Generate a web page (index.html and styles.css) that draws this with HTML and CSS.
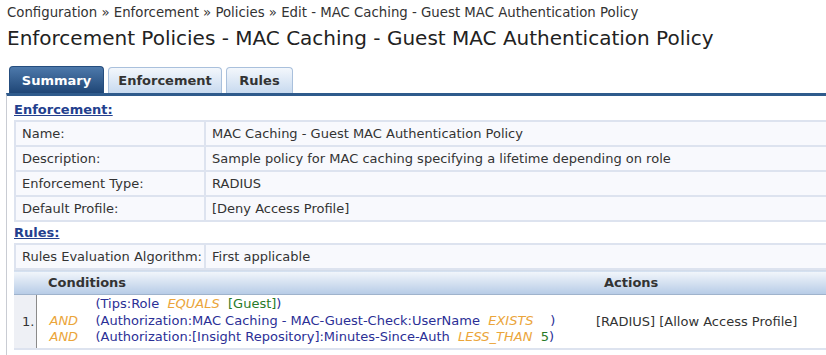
FILE: index.html
```html
<!DOCTYPE html>
<html>
<head>
  <title>Enforcement Policies - MAC Caching</title>
  <link rel="stylesheet" href="styles.css">
</head>
<body>
  <div class="crumbs">Configuration &raquo; Enforcement &raquo; Policies &raquo; Edit - MAC Caching - Guest MAC Authentication Policy</div>
  <h1>Enforcement Policies - MAC Caching - Guest MAC Authentication Policy</h1>

  <div class="tabs">
    <a class="tab active">Summary</a>
    <a class="tab">Enforcement</a>
    <a class="tab">Rules</a>
  </div>

  <div class="panel">
    <div class="section-title">Enforcement:</div>
    <table class="props">
      <tr><td class="label">Name:</td><td>MAC Caching - Guest MAC Authentication Policy</td></tr>
      <tr><td class="label">Description:</td><td>Sample policy for MAC caching specifying a lifetime depending on role</td></tr>
      <tr><td class="label">Enforcement Type:</td><td>RADIUS</td></tr>
      <tr><td class="label">Default Profile:</td><td>[Deny Access Profile]</td></tr>
    </table>

    <div class="section-title rules-title">Rules:</div>
    <table class="props">
      <tr><td class="label">Rules Evaluation Algorithm:</td><td>First applicable</td></tr>
    </table>

    <table class="rules">
      <tr>
        <th class="num-head"></th>
        <th class="cond-head">Conditions</th>
        <th class="act-head">Actions</th>
      </tr>
      <tr>
        <td class="num">1.</td>
        <td class="cond">
          <div class="expr">
            <span class="op"></span>
            <span class="attr">(Tips:Role&nbsp; <i class="kw">EQUALS</i>&nbsp; <span class="val">[Guest]</span>)</span>
            <span class="op">AND</span>
            <span class="attr">(Authorization:MAC Caching - MAC-Guest-Check:UserName&nbsp; <i class="kw">EXISTS</i>&nbsp;&nbsp;&nbsp; )</span>
            <span class="op">AND</span>
            <span class="attr">(Authorization:[Insight Repository]:Minutes-Since-Auth&nbsp; <i class="kw">LESS_THAN</i>&nbsp; <span class="val">5</span>)</span>
          </div>
        </td>
        <td class="act">[RADIUS] [Allow Access Profile]</td>
      </tr>
    </table>
  </div>
</body>
</html>
```

FILE: styles.css
```css
body {
  margin: 0;
  font-family: 'DejaVu Sans', Verdana, sans-serif;
  font-size: 13px;
  color: #333;
  background: #fff;
  overflow: hidden;
}

.crumbs {
  padding: 4px 0 0 7px;
  height: 17px;
  line-height: 17px;
  font-size: 13.3px;
  color: #333;
}

h1 {
  margin: 0;
  padding: 4px 0 0 7px;
  font-size: 20px;
  font-weight: normal;
  line-height: 26px;
  color: #222;
}

.tabs {
  display: flex;
  gap: 4px;
  margin: 15px 0 0 9px;
  height: 27px;
  align-items: flex-end;
}

.tab {
  display: block;
  height: 26px;
  line-height: 26px;
  padding: 0;
  box-sizing: border-box;
  border: 1px solid #a9c0dc;
  border-bottom: none;
  border-radius: 4px 4px 0 0;
  background: linear-gradient(#f3f7fc, #c8daef);
  color: #333;
  font-weight: bold;
  text-align: center;
}

.tab:nth-child(1) { width: 95px; height: 27px; line-height: 28px; }
.tab:nth-child(2) { width: 114px; }
.tab:nth-child(3) { width: 67px; }

.tab.active {
  background: linear-gradient(#4d79ab, #1f4676);
  border-color: #254d7e;
  color: #fff;
}

.panel {
  margin-left: 6px;
  border-top: 3px solid #2f5b8c;
  border-left: 1px solid #c9ccd3;
  padding: 0 0 10px 7px;
  min-height: 260px;
}

.section-title {
  padding-top: 5px;
  height: 19px;
  line-height: 18px;
  font-weight: bold;
  color: #23408e;
  text-decoration: underline;
}

.section-title.rules-title {
  padding-top: 2px;
}

.props {
  width: 100%;
  border-collapse: collapse;
  background: #f8f9fd;
  border-top: 2px solid #dde3ef;
}

.props td {
  height: 23px;
  padding: 0 0 0 6px;
  border-bottom: 2px solid #dde3ef;
  border-left: 2px solid #dde3ef;
}

.props td.label {
  width: 182px;
}

.rules {
  width: 100%;
  border-collapse: collapse;
}

.rules th {
  height: 23px;
  padding: 0;
  background: linear-gradient(#f2f6fb, #b6cbe6);
  border-top: 1px solid #d3dcea;
  border-bottom: 1px solid #9fb3cc;
  text-align: left;
  font-weight: bold;
  color: #333;
}

.rules th.num-head { width: 22px; }
.rules th.cond-head { padding-left: 12px; width: 542px; }
.rules th.act-head { padding-left: 14px; }

.rules td {
  border-bottom: 2px solid #dde3ef;
  vertical-align: middle;
}

.rules td.num {
  width: 22px;
  padding: 0 0 0 8px;
  box-sizing: border-box;
  background: #eef0f5;
  border-right: 1px solid #8a8a8a;
}

.rules td.cond {
  padding: 1px 0 2px 0;
}

.expr {
  display: grid;
  grid-template-columns: 59px auto;
  line-height: 16.5px;
}

.op {
  padding-left: 13px;
  font-style: italic;
  color: #eba53a;
}

.attr {
  color: #2b2f96;
  white-space: nowrap;
}

.kw {
  color: #eba53a;
}

.val {
  color: #287a28;
}

.rules td.act {
  padding: 0 0 0 6px;
  color: #333;
  white-space: nowrap;
}
```
